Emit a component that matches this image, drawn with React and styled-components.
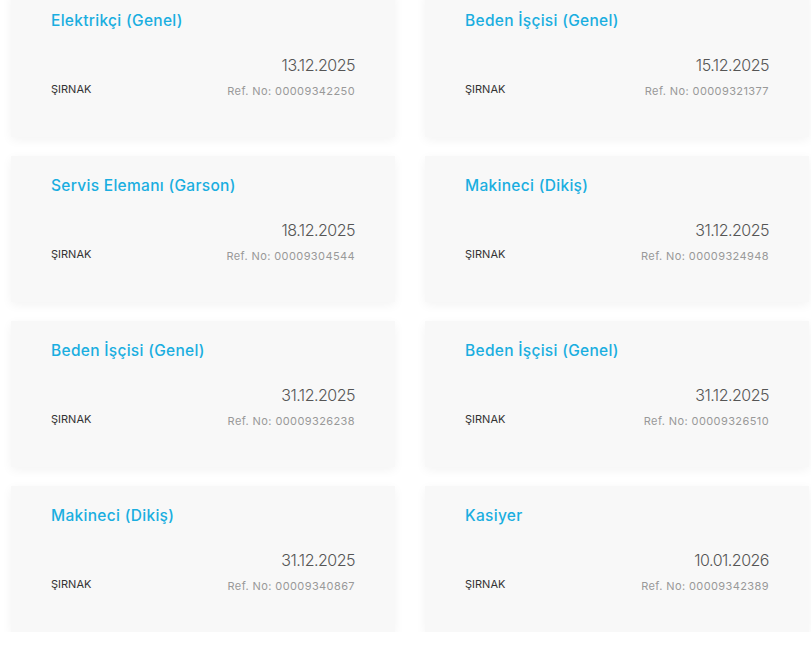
import React from "react";
import styled, { createGlobalStyle } from "styled-components";

const jobs = [
  { title: "Elektrikçi (Genel)", date: "13.12.2025", ref: "00009342250" },
  { title: "Beden İşçisi (Genel)", date: "15.12.2025", ref: "00009321377" },
  { title: "Servis Elemanı (Garson)", date: "18.12.2025", ref: "00009304544" },
  { title: "Makineci (Dikiş)", date: "31.12.2025", ref: "00009324948" },
  { title: "Beden İşçisi (Genel)", date: "31.12.2025", ref: "00009326238" },
  { title: "Beden İşçisi (Genel)", date: "31.12.2025", ref: "00009326510" },
  { title: "Makineci (Dikiş)", date: "31.12.2025", ref: "00009340867" },
  { title: "Kasiyer", date: "10.01.2026", ref: "00009342389" },
];

export default function App() {
  return (
    <>
      <GlobalStyle />
      <Grid>
        {jobs.map((job, i) => (
          <Card key={i}>
            <Title>{job.title}</Title>
            <Bottom>
              <City>ŞIRNAK</City>
              <Meta>
                <DateText>{job.date}</DateText>
                <Ref>Ref. No: {job.ref}</Ref>
              </Meta>
            </Bottom>
          </Card>
        ))}
      </Grid>
    </>
  );
}

const GlobalStyle = createGlobalStyle`
  body {
    margin: 0;
    background: #fff;
    font-family: Inter, "Noto Sans", sans-serif;
    overflow: hidden;
  }
`;

const Grid = styled.div`
  display: grid;
  grid-template-columns: 384px 384px;
  column-gap: 30px;
  row-gap: 19px;
  margin-top: -9px;
  padding-left: 11px;
`;

const Card = styled.div`
  background: #f8f8f8;
  box-shadow: 0 3px 10px rgba(0, 0, 0, 0.05);
  height: 146px;
  box-sizing: border-box;
  padding: 19px 40px 0 40px;
`;

const Title = styled.div`
  color: #1aaee0;
  font-size: 15.5px;
  font-weight: 500;
  letter-spacing: 0.3px;
  line-height: 22px;
`;

const Bottom = styled.div`
  display: flex;
  justify-content: space-between;
  align-items: flex-end;
  margin-top: 22px;
`;

const City = styled.div`
  color: #333;
  font-size: 11px;
  line-height: 18px;
  margin-bottom: 2px;
`;

const Meta = styled.div`
  display: flex;
  flex-direction: column;
  align-items: flex-end;
`;

const DateText = styled.div`
  color: #555;
  font-size: 16px;
  font-weight: 300;
  letter-spacing: -0.5px;
  line-height: 22px;
`;

const Ref = styled.div`
  color: #999;
  font-size: 11px;
  letter-spacing: 0.4px;
  line-height: 18px;
  margin-top: 6px;
`;
